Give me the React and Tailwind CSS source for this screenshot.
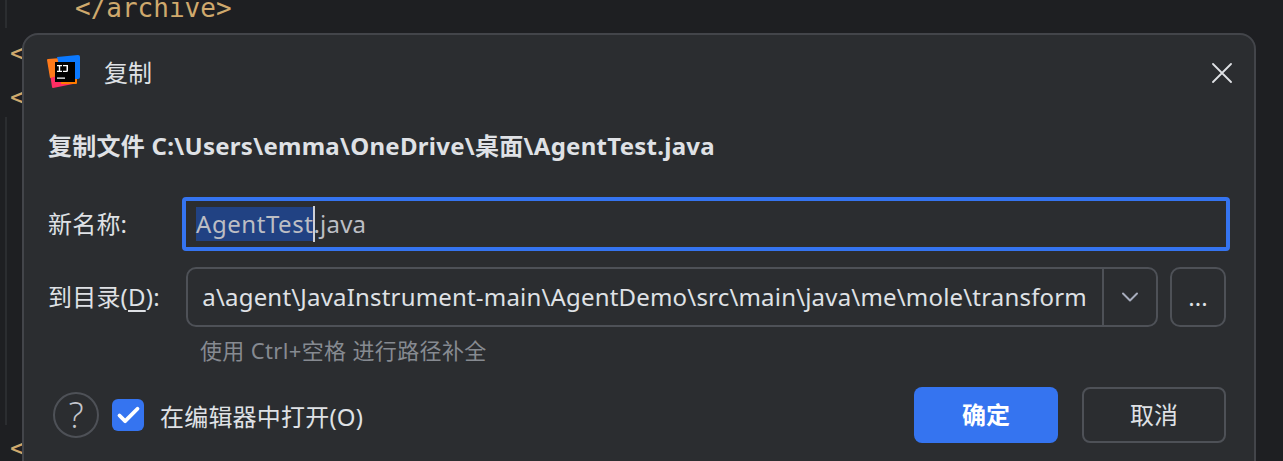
import React from 'react';
import { ChevronDown, Check } from 'lucide-react';

const FONT = "font-['Noto_Sans','Noto_Sans_CJK_SC',sans-serif]";
const MONO = "font-['DejaVu_Sans_Mono',monospace] text-[26px] leading-[32px] text-[#cfa96d]";

function Logo() {
  return (
    <svg width="33" height="33" viewBox="0 0 33 33" className="mb-[4px] ml-[-1px] shrink-0">
      <path d="M1 6 L12 4 L26 29 L6 33 Q5 33 5 32 Z" fill="#ff2d63" />
      <path d="M0 5 Q0 4 1 4 L14 3 L14 20 L3 23 Z" fill="#ff7a1a" />
      <path d="M14 14 L30 14 L30 28 Q30 29 29 29 L14 29 Z" fill="#ff7a00" />
      <path d="M10 2 L31 0 Q33 0 33 2 L33 22 Q33 24 31 24 L16 24 Z" fill="#0b79ff" />
      <rect x="8" y="7" width="20" height="20" fill="#000" />
      <path d="M10 10h5v1.200h-1.800v4.600H15V17h-5v-1.200h1.800v-4.600H10zM16 10h5v5.500q0 1.500-1.500 1.500H16v-1.200h3.500v-4.600H16zM10 22.500h8v1.300h-8z" fill="#fff" />
    </svg>
  );
}

function FieldLabel({ children }) {
  return <div className="w-[134px] shrink-0 text-[24px] leading-none tracking-[0.2px] text-[#dfe1e5]">{children}</div>;
}

export default function App() {
  return (
    <div className={`relative h-[461px] w-[1283px] overflow-hidden bg-[#1e1f22] ${FONT}`}>
      {/* editor behind the dialog */}
      <div className={`absolute left-[75px] top-[-8px] ${MONO}`}>&lt;/archive&gt;</div>
      <div className={`absolute left-[10px] top-[37px] ${MONO}`}>&lt;</div>
      <div className={`absolute left-[10px] top-[81px] ${MONO}`}>&lt;</div>
      <div className={`absolute left-[10px] top-[432px] ${MONO}`}>&lt;</div>
      <div className="absolute left-[5px] top-0 h-[28px] w-[2px] bg-[#2b2d30]" />
      <div className="absolute left-[5px] top-[117px] h-[308px] w-[2px] bg-[#2b2d30]" />

      {/* dialog */}
      <div className="absolute left-[22px] top-[33px] h-[450px] w-[1234px] rounded-[16px] border-2 border-[#43454a] bg-[#2b2d30] pl-[24px] pr-[28px]">
        <div className="flex h-[74px] items-center pt-[2px]">
          <Logo />
          <span className="ml-[24px] text-[24px] text-[#dfe1e5]">复制</span>
          <svg width="20" height="20" viewBox="0 0 20 20" className="ml-auto mr-[-6px] text-[#dfe1e5]">
            <path d="M1 1 L19 19 M19 1 L1 19" stroke="currentColor" strokeWidth="1.8" strokeLinecap="round" />
          </svg>
        </div>

        <div className="mt-[17px] h-[40px] text-[24px] font-bold leading-[40px] tracking-[0.27px] text-[#dfe1e5]">复制文件 C:\Users\emma\OneDrive\桌面\AgentTest.java</div>

        <div className="mt-[31px] flex h-[54px] items-center">
          <FieldLabel>新名称:</FieldLabel>
          <div className="flex h-[54px] w-[1048px] shrink-0 items-center rounded-[4px] border-[4px] border-[#3574f0] pl-[10px] text-[24px] text-[#bcbec4]">
            <span className="bg-[#214283] leading-[34px] tracking-[0.55px]">AgentTest</span>
            <span className="h-[36px] w-[2px] bg-[#ced0d6]" />
            <span className="ml-[-2px] leading-[34px] tracking-[0.2px]">.java</span>
          </div>
        </div>

        <div className="mt-[16px] flex h-[60px] items-center">
          <FieldLabel>
            到目录(<span className="underline underline-offset-4">D</span>):
          </FieldLabel>
          <div className="ml-[4px] flex h-[60px] w-[972px] overflow-hidden rounded-[10px] border-2 border-[#4e5157]">
            <div className="flex min-w-0 flex-1 items-center justify-end overflow-hidden border-r-2 border-[#4e5157] pr-[15px] text-[24px] tracking-[0.18px] whitespace-nowrap text-[#dfe1e5]">
              <span className="shrink-0">a\agent\JavaInstrument-main\AgentDemo\src\main\java\me\mole\transform</span>
            </div>
            <div className="flex w-[52px] shrink-0 items-center justify-center">
              <ChevronDown className="text-[#a8adbd]" size={28} strokeWidth={1.7} />
            </div>
          </div>
          <div className="ml-[12px] flex h-[60px] w-[56px] items-center justify-center rounded-[10px] border-2 border-[#4e5157] text-[24px] text-[#dfe1e5]">...</div>
        </div>

        <div className="ml-[152px] mt-[8px] text-[22px] leading-[30px] tracking-[0.35px] text-[#868a91]">使用 Ctrl+空格 进行路径补全</div>

        <div className="mt-[22px] flex h-[56px] items-center">
          <div className="ml-[5px] flex h-[46px] w-[46px] items-center justify-center rounded-full border-2 border-[#4e5157] font-['Open_Sans',sans-serif] text-[36px] font-light leading-none text-[#c4c6cc]">?</div>
          <div className="ml-[13px] flex h-[32px] w-[32px] items-center justify-center rounded-[6px] bg-[#3574f0]">
            <Check className="text-white" size={27} strokeWidth={3.4} />
          </div>
          <span className="ml-[16px] pt-[3px] text-[24px] tracking-[0.2px] text-[#dfe1e5]">在编辑器中打开(O)</span>
          <button className="ml-auto h-[56px] w-[144px] rounded-[8px] bg-[#3574f0] text-[24px] font-bold text-white">确定</button>
          <button className="ml-[24px] h-[56px] w-[144px] rounded-[8px] border-2 border-[#4e5157] text-[24px] text-[#dfe1e5]">取消</button>
        </div>
      </div>
    </div>
  );
}
